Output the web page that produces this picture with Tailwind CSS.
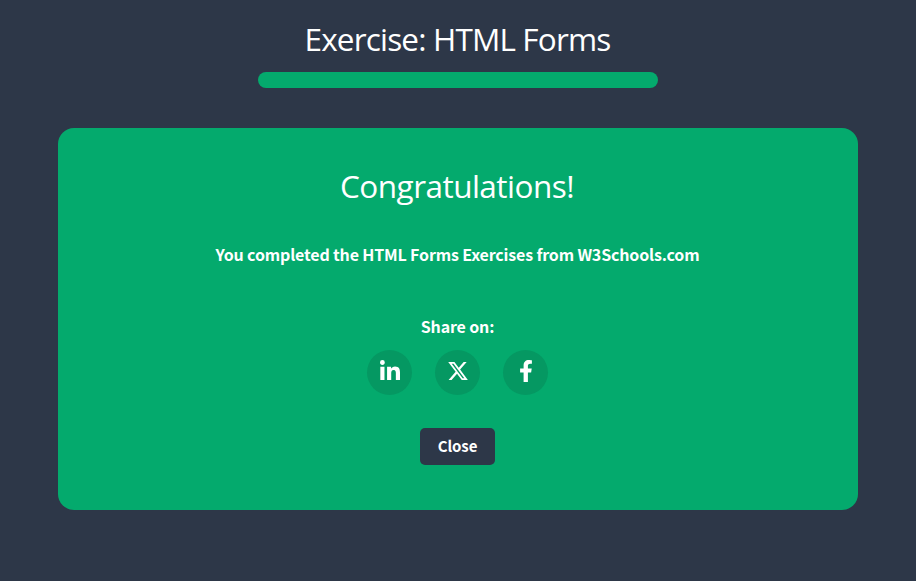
<!DOCTYPE html>
<html lang="en">
<head>
<meta charset="utf-8">
<title>Exercise: HTML Forms</title>
<script src="https://cdn.jsdelivr.net/npm/@tailwindcss/browser@4"></script>
</head>
<body class="flex h-screen flex-col items-center overflow-hidden bg-[#2d3748] font-['Noto_Sans_CJK_SC',sans-serif] text-white">
  <h1 class="mt-[15px] h-[49px] whitespace-nowrap pr-px font-['Open_Sans',sans-serif] text-[31.5px] leading-12 tracking-[-0.83px]">Exercise: HTML Forms</h1>
  <div class="mt-2 h-4 w-[400px] shrink-0 rounded-full bg-[#04aa6d]"></div>
  <main class="mt-10 flex h-[382px] w-[800px] shrink-0 flex-col items-center rounded-2xl bg-[#04aa6d] pr-px">
    <h2 class="mt-[34px] h-12 whitespace-nowrap pr-px font-['Open_Sans',sans-serif] text-[31.5px] leading-12 tracking-[-0.53px]">Congratulations!</h2>
    <p class="mt-8 h-6 whitespace-nowrap text-[16px] leading-6 font-bold tracking-[-0.16px]">You completed the HTML Forms Exercises from W3Schools.com</p>
    <p class="mt-12 h-6 whitespace-nowrap text-[16px] leading-6 font-bold tracking-[-0.16px]">Share on:</p>
    <div class="mt-3 flex gap-[23px]">
      <a class="flex size-[45px] items-center justify-center rounded-full bg-[#059862]" aria-label="LinkedIn">
        <svg class="mb-[3px] ml-px h-[23px] w-[20px]" viewBox="0 0 448 512" fill="currentColor"><path d="M100.28 448H7.4V148.9h92.88zM53.79 108.1C24.09 108.1 0 83.5 0 53.8a53.79 53.79 0 0 1 107.58 0c0 29.7-24.1 54.3-53.79 54.3zM447.9 448h-92.68V302.4c0-34.7-.7-79.2-48.29-79.2-48.29 0-55.69 37.7-55.69 76.7V448h-92.78V148.9h89.08v40.8h1.3c12.4-23.5 42.69-48.3 87.88-48.3 94 0 111.28 61.9 111.28 142.3V448z"/></svg>
      </a>
      <a class="flex size-[45px] items-center justify-center rounded-full bg-[#059862]" aria-label="X">
        <svg class="mb-[3px] ml-px h-[18px] w-[20px]" viewBox="21.8 48 468.9 416" preserveAspectRatio="none" fill="currentColor"><path d="M389.2 48h70.6L305.6 224.2 487 464H345L233.7 318.6 106.5 464H35.8L200.7 275.5 26.8 48H172.4L272.9 180.9 389.2 48zM364.4 421.8h39.1L151.1 88h-42L364.4 421.8z"/></svg>
      </a>
      <a class="flex size-[45px] items-center justify-center rounded-full bg-[#059862]" aria-label="Facebook">
        <svg class="mb-[3px] ml-px h-[22px] w-[14px]" viewBox="0 0 320 512" fill="currentColor"><path d="m279.14 288 14.22-92.66h-88.91v-60.13c0-25.35 12.42-50.06 52.24-50.06h40.42V6.26S260.43 0 225.36 0c-73.22 0-121.08 44.38-121.08 124.72v70.62H22.89V288h81.39v224h100.17V288z"/></svg>
      </a>
    </div>
    <button class="mt-[33px] h-[37px] w-[75px] rounded-[5px] bg-[#2d3748] pb-[2px] text-[15px] leading-[35px] font-bold tracking-[-0.1px]">Close</button>
  </main>
</body>
</html>
